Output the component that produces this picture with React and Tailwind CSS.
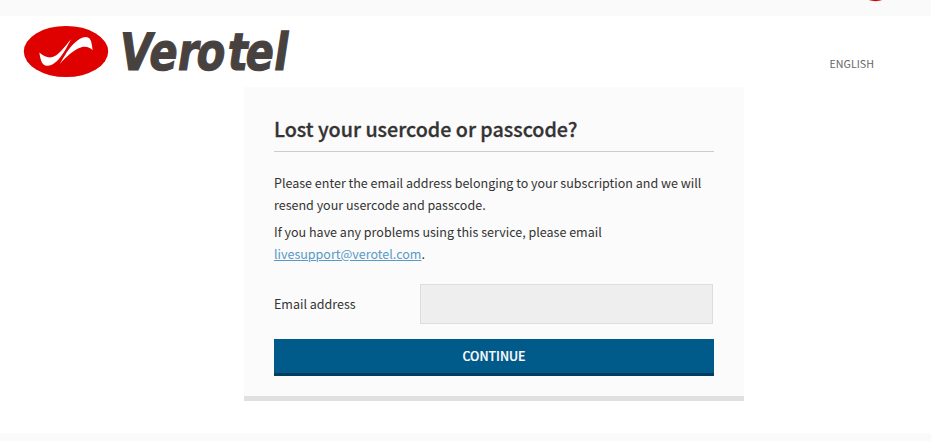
import { useState } from "react";

function Logo() {
  return (
    <svg
      width="270"
      height="62"
      viewBox="22 24 270 62"
      role="img"
      aria-label="Verotel"
      className="overflow-visible"
    >
      <ellipse cx="66" cy="51.5" rx="42.2" ry="25.6" fill="#df0000" />
      <path
        d="M39.4 52.5C43 55.5 47 58 51.5 57.3C58 56 64 47.500 71 39.200C67 47 62 56.500 56.500 61.500C52 65.500 47 67.300 43.500 64.500C41 62 40 57 39.400 52.500Z"
        fill="#fff"
      />
      <path
        d="M59.800 64C64 56.500 69 48 74.500 43C79 38.500 85 35.300 89 38C91.800 40.500 92 46 92.700 50.200C90 47.500 86 46 81.500 47.300C74 49.500 66 57 59.800 64Z"
        fill="#fff"
      />
      <text
        transform="translate(117.2 70.4) skewX(-8.7) scale(0.81 1)"
        x="0 37.2 72.2 95.6 134 156 191.2"
        fill="#47423f"
        stroke="#47423f"
        strokeWidth="1.2"
        className="font-['DejaVu_Sans',sans-serif] text-[51.5px] font-bold"
      >
        Verotel
      </text>
    </svg>
  );
}

export default function App() {
  const [email, setEmail] = useState("");

  return (
    <div className="h-[441px] overflow-hidden bg-[#fafafa] font-['Noto_Sans_CJK_SC',sans-serif] text-[#333]">
      {/* Top strip */}
      <div className="flex h-4 justify-end pr-[48px]">
        <svg width="15" height="2" viewBox="0 0 15 2">
          <ellipse cx="7.500" cy="-14" rx="18" ry="15.200" fill="#df0000" />
        </svg>
      </div>

      <main className="h-[417px] bg-white">
        <header className="flex h-[71px] items-start justify-between pt-2 pr-[57px] pl-[22px]">
          <Logo />
          <span className="mt-[31px] text-[10.7px] leading-[18px] text-[#666]">ENGLISH</span>
        </header>

        {/* Recovery form */}
        <section className="ml-[244px] h-[314px] w-[500px] border-b-[5px] border-[#e0e0e0] bg-[#fbfbfb] px-[30px] pt-[26px]">
          <h1 className="h-[39px] border-b border-[#ccc] text-[19.7px] leading-[32px] font-medium [-webkit-text-stroke:0.3px_#333]">
            Lost your usercode or passcode?
          </h1>

          <div className="mt-[20px] text-[12.52px] leading-[22px]">
            <p>
              Please enter the email address belonging to your subscription and we will
              <br />
              resend your usercode and passcode.
            </p>
            <p className="mt-[5px]">
              If you have any problems using this service, please email
              <br />
              <a href="mailto:livesupport@verotel.com" className="text-[#5899c6] underline">
                livesupport@verotel.com
              </a>
              .
            </p>
          </div>

          <form onSubmit={(e) => e.preventDefault()}>
            <div className="mt-[19px] flex h-10 items-center">
              <label htmlFor="email" className="w-[146px] text-[12.5px]">
                Email address
              </label>
              <input
                id="email"
                type="text"
                value={email}
                onChange={(e) => setEmail(e.target.value)}
                className="h-10 w-[293px] border border-[#ddd] bg-[#eee] px-2 text-[12.5px] outline-none"
              />
            </div>
            <button
              type="submit"
              className="mt-[15px] block h-[37px] w-full border-b-[3px] border-[#003d60] bg-[#005a8a] text-[12.4px] font-medium text-white [-webkit-text-stroke:0.2px_#fff]"
            >
              CONTINUE
            </button>
          </form>
        </section>
      </main>
    </div>
  );
}
